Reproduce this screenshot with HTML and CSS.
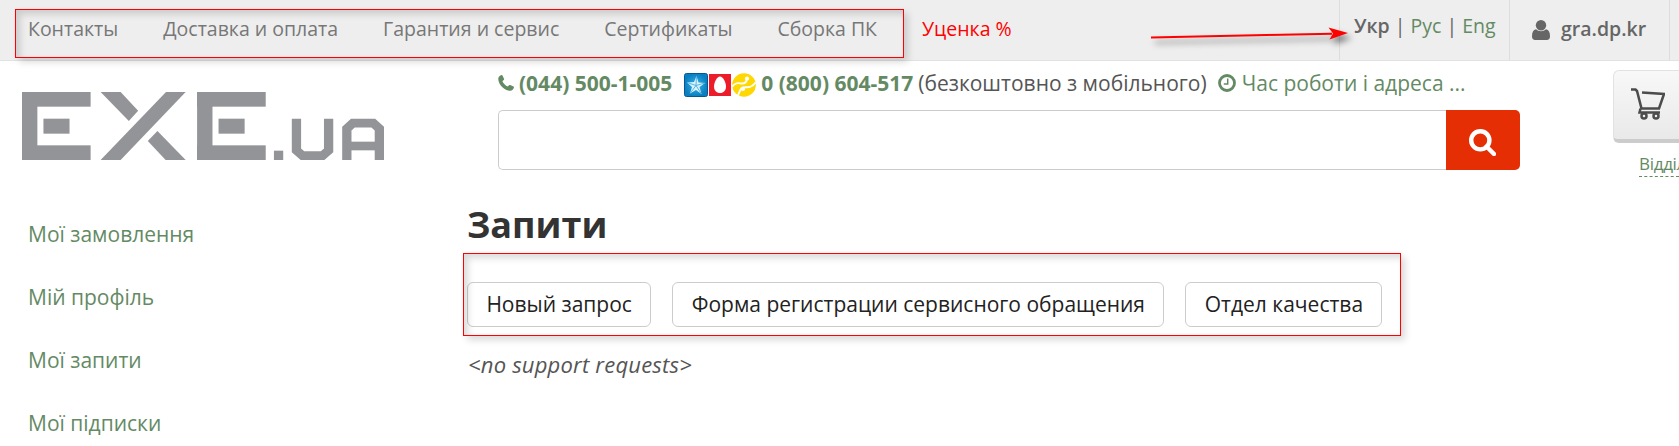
FILE: index.html
```html
<!DOCTYPE html>
<html lang="uk">
<head>
<meta charset="utf-8">
<title>EXE.ua — Запити</title>
<link rel="stylesheet" href="styles.css">
</head>
<body>
<header class="topbar">
  <nav class="topnav">
    <a>Контакты</a>
    <a>Доставка и оплата</a>
    <a>Гарантия и сервис</a>
    <a>Сертификаты</a>
    <a>Сборка ПК</a>
    <a class="sale">Уценка %</a>
  </nav>
  <div class="lang"><b>Укр</b> | <a>Рус</a> | <a>Eng</a></div>
  <div class="user">
    <svg class="user-icon" viewBox="0 0 18 20"><path d="M4 9.300C1.200 9.800 0 12.200 0 16.500C0 18.700 1.200 20 3.200 20H14.800C16.800 20 18 18.700 18 16.500C18 12.200 16.800 9.800 14 9.300C12.700 10.600 11 11.300 9 11.300S5.300 10.600 4 9.300Z"/><circle cx="9" cy="5.200" r="5.200"/></svg>
    <span>gra.dp.kr</span>
  </div>
</header>

<section class="masthead">
  <svg class="logo" viewBox="62 277 1013 204" preserveAspectRatio="none" role="img" aria-label="EXE.ua">
    <g id="bars">
      <rect x="62" y="277" width="43" height="204"/>
      <rect x="62" y="277" width="192" height="44"/>
      <rect x="62" y="437" width="192" height="44"/>
      <rect x="122" y="357" width="73" height="45"/>
    </g>
    <use href="#bars" x="490"/>
    <polygon points="282,481 465,277 520,277 338,481"/>
    <polygon points="282,277 338,277 387,333 361,364"/>
    <polygon points="441,394 414,424 464,481 520,481"/>
    <rect x="767" y="453" width="26" height="28"/>
    <polyline class="stroke" points="830,357 830,452 847,468 903,468 920,452 920,357"/>
    <polyline class="stroke" points="971,481 971,387 988,370.500 1045,370.500 1062,387 1062,481"/>
    <rect x="971" y="426" width="91" height="26"/>
  </svg>

  <div class="center">
    <div class="phones">
      <svg class="phone-icon" viewBox="0 0 16 16"><path d="M0.300 3.500C0.500 1.700 1.800 0.500 3.600 0.100C4 0 4.300 0.200 4.500 0.600L6 3.800C6.200 4.300 6.100 4.600 5.700 5L4.400 6.200C5.200 8.300 7.500 10.600 9.800 11.600L11 10.300C11.400 9.900 11.700 9.800 12.200 10L15.500 11.600C15.900 11.800 16 12.100 15.900 12.500C15.500 14.400 14.200 15.700 12.300 15.800C6.800 16-0.200 9.400 0.300 3.500Z"/></svg>
      <b class="tel1">(044) 500-1-005</b>
      <span class="operators">
        <svg width="24" height="24" viewBox="0 0 24 24"><defs><radialGradient id="ks"><stop offset="0" stop-color="#39b3ec"/><stop offset="1" stop-color="#087fc0"/></radialGradient></defs><rect x=".5" y=".5" width="23" height="23" rx="2" fill="url(#ks)" stroke="#07588f"/><path d="M12.500 3L14.500 9.500L21 10L15.500 14L17.500 21L12 17L6 20.500L8 14L3 9.500L10 9Z" fill="#d9f2fc"/><path d="M12.500 3L12 12.500L21 10M12 12.500L17.500 21M12 12.500L6 20.500M12 12.500L3 9.500" fill="none" stroke="#4ab0e0" stroke-width=".9"/></svg>
        <svg width="22" height="22" viewBox="0 0 22 22"><rect width="22" height="22" fill="#ed1c2b"/><path d="M11 2.500C14 2.500 17 8.500 17 12.500C17 16.500 14.500 19 11 19S5 16.500 5 12.500C5 8.500 8 2.500 11 2.500Z" fill="#fff"/></svg>
        <svg width="24" height="24" viewBox="0 0 24 24"><circle cx="12" cy="12" r="11.800" fill="#fed800"/><g fill="none" stroke="#fff" stroke-width="1.900"><path d="M0 14C4 8.500 7 10.500 10 10.500C13 10.500 14.500 9 15 6"/><path d="M5 24C8 20 7 16 11 14.500C15 13.500 19 16 23.500 9.500"/></g><circle cx="15" cy="5.500" r="2.100" fill="#fff"/><circle cx="11" cy="16" r="2.100" fill="#fff"/></svg>
      </span>
      <b class="tel2">0 (800) 604-517</b>
      <span class="free">(безкоштовно з мобільного)</span>
      <svg class="clock-icon" viewBox="0 0 18 18"><circle cx="9" cy="9" r="7.500" fill="none" stroke="#648a64" stroke-width="2.800"/><path d="M9.700 4.500V10H5.800" fill="none" stroke="#648a64" stroke-width="1.500"/></svg>
      <a class="hours">Час роботи і адреса ...</a>
    </div>
    <form class="search">
      <input type="text" aria-label="Пошук">
      <button type="button" aria-label="Знайти"><svg width="27" height="27" viewBox="0 0 27 27"><circle cx="11.300" cy="11.300" r="9.100"/><path d="M17.500 17.500L25 25"/></svg></button>
    </form>
  </div>

  <div class="cart">
    <div class="cart-button">
      <svg width="34" height="32" viewBox="0 0 34 32"><path d="M0 1.500H4.500L6 3L10.500 20.500H28L33 6L11 4.500M9.500 20.500L8.500 24.500H29"/><circle cx="13" cy="28" r="2.500"/><circle cx="25" cy="28" r="2.500"/></svg>
    </div>
    <a class="dept">Відділ</a>
  </div>
</section>

<div class="content">
  <aside class="side">
    <a>Мої замовлення</a>
    <a>Мій профіль</a>
    <a>Мої запити</a>
    <a>Мої підписки</a>
  </aside>
  <main class="main">
    <h1>Запити</h1>
    <div class="actions">
      <button type="button">Новый запрос</button>
      <button type="button">Форма регистрации сервисного обращения</button>
      <button type="button">Отдел качества</button>
    </div>
    <p class="empty">&lt;no support requests&gt;</p>
  </main>
</div>

<div class="mark mark-nav"></div>
<div class="mark mark-actions"></div>
<svg class="arrow" width="220" height="40" viewBox="0 0 220 40"><path d="M11 20.500L192 16.700" stroke="#f00" stroke-width="2"/><path d="M208 16L188.500 10.500L193 16.500L189.500 22.500Z" fill="#f00"/></svg>
</body>
</html>
```
FILE: styles.css
```css
* { box-sizing: border-box; }

body {
  margin: 0;
  width: 1679px;
  height: 446px;
  overflow: hidden;
  position: relative;
  background: #fff;
  color: #555;
  font: 21px/30px "Open Sans", "Noto Sans", sans-serif;
  white-space: nowrap;
}

a { color: #648a64; }

.topbar {
  display: flex;
  height: 61px;
  padding-right: 9px;
  background: #eee;
  border-bottom: 1px solid #e2e2e2;
  color: #666;
  font-size: 19.5px;
}

.topnav {
  display: flex;
  flex: 1;
  gap: 45px;
  padding-left: 28px;
  line-height: 58px;
}

.topnav a { color: #777; }
.topnav .sale { color: #f00; }

.lang {
  width: 170px;
  padding-left: 14px;
  border-left: 1px solid #ddd;
  line-height: 52px;
}

.lang b, .user { font-weight: 600; }

.user {
  display: flex;
  width: 161px;
  padding-left: 22px;
  gap: 11px;
  border: solid #ddd;
  border-width: 0 1px;
  line-height: 58px;
}

.user-icon {
  width: 18px;
  height: 20px;
  margin-top: 20px;
  fill: #666;
}

.masthead {
  display: flex;
  height: 139px;
}

.logo {
  flex: none;
  width: 362px;
  height: 68px;
  margin: 31px 114px 0 22px;
  fill: #929497;
}

.logo .stroke {
  fill: none;
  stroke: #929497;
  stroke-width: 26;
}

.center {
  flex: none;
  width: 1022px;
  padding-top: 7px;
}

.phones {
  display: flex;
  height: 42px;
}

.phones b { color: #648a64; }

.phone-icon {
  width: 16px;
  height: 16px;
  margin: 7px 5px 0 0;
  fill: #648a64;
}

.operators {
  display: flex;
  align-items: center;
  gap: 1px;
  height: 24px;
  margin: 5px 5px 0 12px;
}

.free { margin-left: 5px; }

.clock-icon {
  width: 18px;
  height: 18px;
  margin: 6px 6px 0 11px;
}

.search {
  display: flex;
  height: 60px;
}

.search input {
  flex: 1;
  border: 1px solid #ccc;
  border-right: 0;
  border-radius: 5px 0 0 5px;
}

.search button {
  width: 74px;
  padding: 7px 2px 0 0;
  border: 0;
  border-radius: 0 5px 5px 0;
  background: #e62e05;
}

.search svg {
  fill: none;
  stroke: #fff;
  stroke-width: 4.4;
  stroke-linecap: round;
}

.cart {
  flex: none;
  width: 66px;
  margin: 9px 0 0 93px;
}

.cart-button {
  height: 73px;
  padding: 17px;
  border: 1px solid #e2e2e2;
  border-right: 0;
  border-bottom: 4px solid #ccc;
  border-radius: 6px 0 0 6px;
  background: linear-gradient(#f8f8f8, #e9e9e9);
}

.cart-button svg {
  display: block;
  fill: none;
  stroke: #4c4c4c;
  stroke-width: 2.5;
}

.dept {
  display: block;
  width: 40px;
  margin: 8px 0 0 26px;
  overflow: hidden;
  border-bottom: 1px dashed #648a64;
  font-size: 17px;
  line-height: 25px;
  letter-spacing: -.3px;
}

.content { display: flex; }

.side {
  display: flex;
  flex-direction: column;
  width: 467px;
  gap: 33px;
  padding: 19px 0 0 28px;
}

h1 {
  margin: 0;
  color: #333;
  font-size: 36px;
  line-height: 50px;
}

.actions {
  display: flex;
  gap: 21px;
  margin-top: 32px;
}

.actions button {
  height: 45px;
  padding: 0 18.4px 1px;
  border: 1px solid #ccc;
  border-radius: 6px;
  background: #fff;
  color: #222;
  font: inherit;
}

.empty {
  margin: 22px 0 0 1px;
  font-size: 22px;
  font-style: italic;
  letter-spacing: .2px;
}

/* Annotations lying over the page */
.mark {
  position: absolute;
  border: 1px solid #f00;
  box-shadow: 4px 4px 7px rgba(0, 0, 0, .15), inset 4px 4px 7px rgba(0, 0, 0, .15);
}

.mark-nav {
  left: 15px;
  top: 9px;
  width: 889px;
  height: 49px;
}

.mark-actions {
  left: 463px;
  top: 253px;
  width: 938px;
  height: 83px;
}

.arrow {
  position: absolute;
  left: 1140px;
  top: 17px;
  filter: drop-shadow(4px 5px 3px rgba(0, 0, 0, .5));
}
```
